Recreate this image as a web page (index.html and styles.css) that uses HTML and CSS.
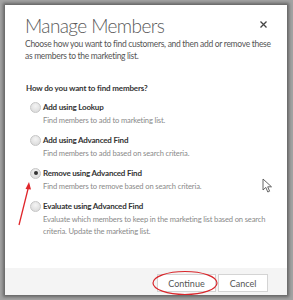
FILE: index.html
```html
<!DOCTYPE html>
<html>
<head>
<meta charset="utf-8">
<link rel="stylesheet" href="styles.css">
</head>
<body>
<div class="backdrop">
  <div class="dialog">
    <div class="content">
      <div class="header">
        <h1 class="title">Manage Members</h1>
        <svg class="close" width="7" height="7" viewBox="0 0 7 7"><path d="M0.5 0.5 L6.5 6.5 M6.5 0.5 L0.5 6.5" stroke="#444" stroke-width="1.3"/></svg>
      </div>
      <p class="intro">Choose how you want to find customers, and then add or remove these<br>as members to the marketing list.</p>
      <p class="question">How do you want to find members?</p>
      <div class="options">
        <div class="option">
          <div class="opt-row"><span class="radio"></span><span class="label">Add using Lookup</span></div>
          <p class="desc">Find members to add to marketing list.</p>
        </div>
        <div class="option">
          <div class="opt-row"><span class="radio"></span><span class="label">Add using Advanced Find</span></div>
          <p class="desc">Find members to add based on search criteria.</p>
        </div>
        <div class="option">
          <div class="opt-row"><span class="radio checked"></span><span class="label">Remove using Advanced Find</span></div>
          <p class="desc">Find members to remove based on search criteria.</p>
        </div>
        <div class="option">
          <div class="opt-row"><span class="radio"></span><span class="label">Evaluate using Advanced Find</span></div>
          <p class="desc">Evaluate which members to keep in the marketing list based on search<br>criteria. Update the marketing list.</p>
        </div>
      </div>
    </div>
    <div class="footer">
      <button class="btn btn-continue">Continue</button>
      <button class="btn btn-cancel">Cancel</button>
    </div>
  </div>
  <svg class="arrow" width="40" height="60" viewBox="0 0 40 60">
    <path d="M4 52 L14 12" stroke="#e0262b" stroke-width="1.3" fill="none"/>
    <path d="M14 9 L10.5 16 L16 16.5 Z" fill="#e0262b"/>
  </svg>
  <svg class="ellipse" width="70" height="28" viewBox="0 0 70 28">
    <ellipse cx="35" cy="14" rx="32" ry="11.5" fill="none" stroke="#d9262b" stroke-width="1.2"/>
  </svg>
  <svg class="cursor" width="12" height="16" viewBox="0 0 12 16">
    <path d="M1 1 L1 12 L3.8 9.4 L5.8 14 L7.6 13.2 L5.7 8.8 L9.5 8.8 Z" fill="#fff" stroke="#555" stroke-width="0.9" stroke-linejoin="round"/>
  </svg>
</div>
</body>
</html>
```
FILE: styles.css
```css
html, body {
  margin: 0;
  padding: 0;
}
body {
  width: 293px;
  height: 300px;
  overflow: hidden;
  background: #a3a3a3;
  font-family: Lato, "Open Sans", sans-serif;
}
.backdrop {
  position: relative;
  width: 293px;
  height: 300px;
  padding: 5px 6px 5px 5px;
  box-sizing: border-box;
}
.dialog {
  width: 282px;
  height: 290px;
  background: #fff;
  box-shadow: 0 0 3px 2px rgba(50, 50, 50, 0.55);
  display: flex;
  flex-direction: column;
}
.content {
  flex: 1;
  padding: 0 20px;
}
.header {
  display: flex;
  justify-content: space-between;
  align-items: flex-start;
}
.title {
  margin: 9px 0 0;
  font-family: "Lato Light", Lato, sans-serif;
  font-size: 19px;
  font-weight: 300;
  line-height: 24px;
  letter-spacing: -0.6px;
  color: #5a5a5a;
}
.close {
  margin-top: 16px;
}
.intro {
  margin: 0;
  font-size: 8.5px;
  letter-spacing: -0.3px;
  line-height: 12px;
  color: #555;
  white-space: nowrap;
}
.question {
  margin: 20px 0 0 1px;
  font-size: 8px;
  font-weight: 700;
  letter-spacing: -0.15px;
  color: #333;
  line-height: 12px;
}
.options {
  margin-top: 7px;
  display: flex;
  flex-direction: column;
  gap: 8px;
}
.opt-row {
  display: flex;
  align-items: center;
  gap: 2px;
  margin-left: 5px;
}
.radio {
  width: 11px;
  height: 11px;
  border-radius: 50%;
  border: 1px solid #c6c6c6;
  background: radial-gradient(circle at 50% 35%, #f4f4f4, #d6d6d6);
  box-sizing: border-box;
  display: flex;
  align-items: center;
  justify-content: center;
}
.radio.checked::after {
  content: "";
  width: 4px;
  height: 4px;
  border-radius: 50%;
  background: #333;
}
.label {
  font-size: 8px;
  font-weight: 700;
  letter-spacing: -0.2px;
  color: #333;
  line-height: 12px;
}
.desc {
  margin: 1px 0 0 18px;
  font-size: 7.6px;
  letter-spacing: -0.15px;
  line-height: 12px;
  color: #8a8a8a;
  white-space: nowrap;
}
.footer {
  height: 27px;
  background: #f4f4f4;
  display: flex;
  justify-content: flex-end;
  align-items: center;
  gap: 2px;
  padding: 0 19px 0 0;
}
.btn {
  height: 18px;
  margin-top: 3px;
  border: 1px solid #d4d4d4;
  background: #fff;
  font-family: inherit;
  font-size: 9px;
  color: #555;
  padding: 0;
}
.btn-continue {
  width: 59px;
}
.btn-cancel {
  width: 50px;
}
.arrow {
  position: absolute;
  left: 15px;
  top: 173px;
}
.ellipse {
  position: absolute;
  left: 150px;
  top: 269px;
}
.cursor {
  position: absolute;
  left: 262px;
  top: 178px;
}
```
